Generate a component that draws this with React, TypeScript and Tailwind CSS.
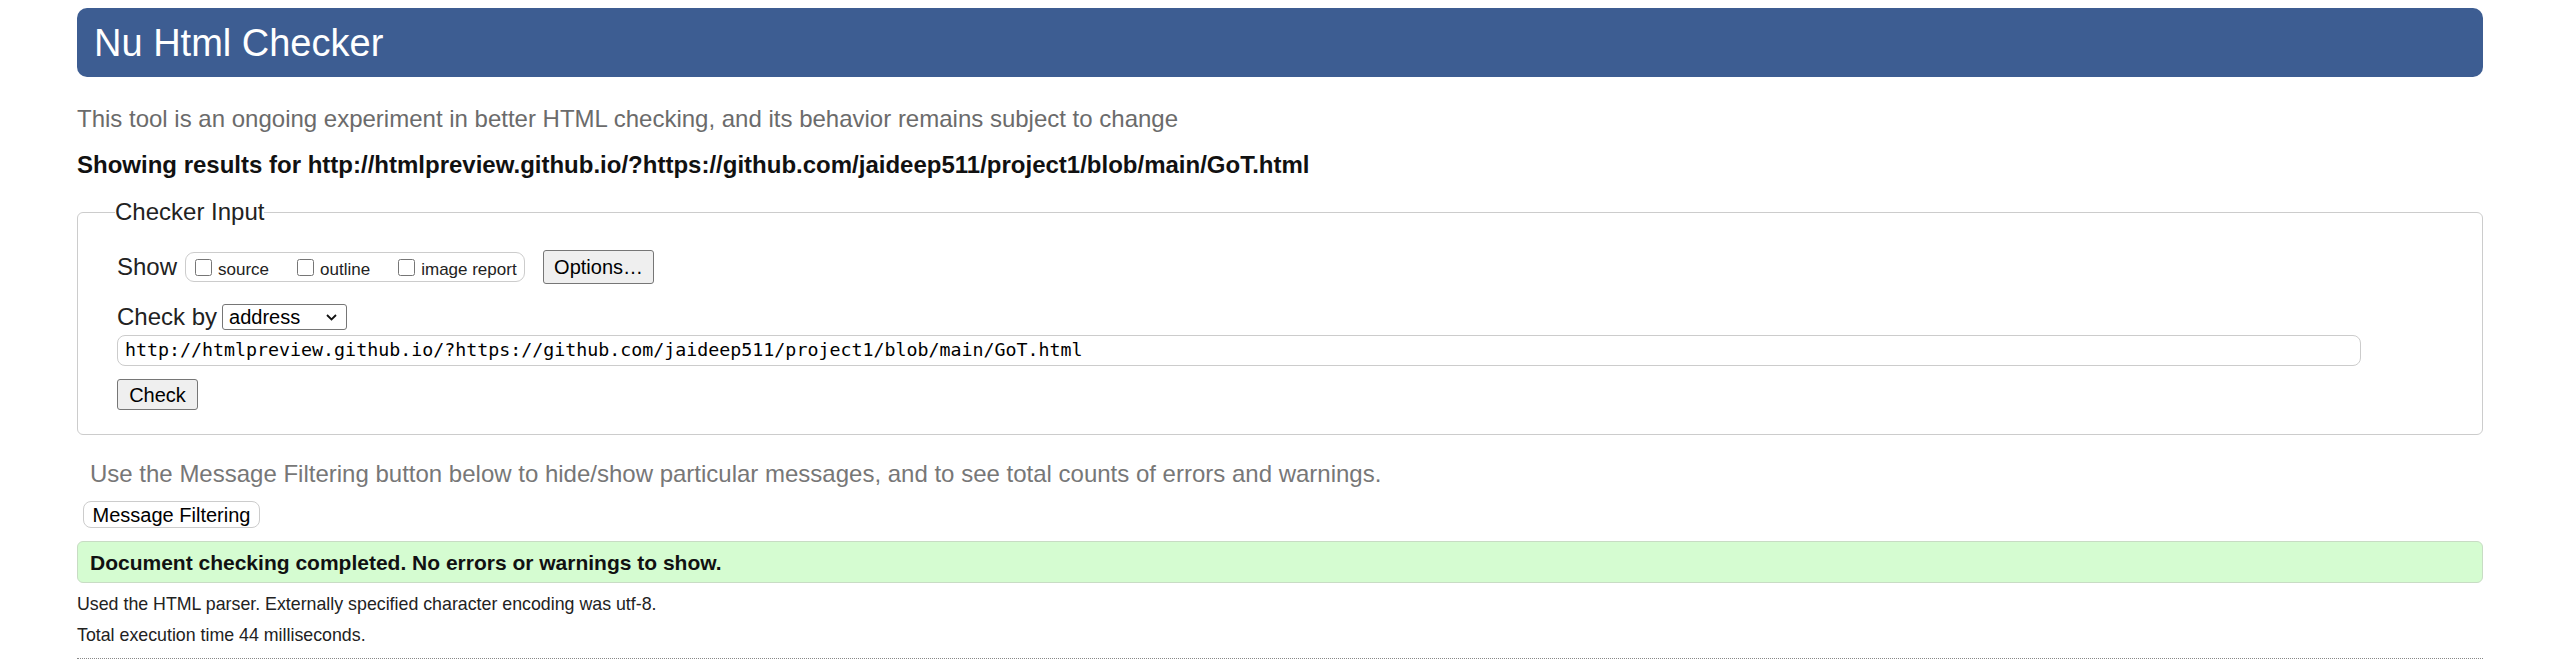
import React from "react";

export default function App() {
  return (
    <div
      className="bg-white min-h-[663px] px-[77px] pt-[8px] text-[#222]"
      style={{ fontFamily: '"Liberation Sans", Arial, sans-serif' }}
    >
      <div className="h-[69px] rounded-[10px] bg-[#3d5d92] flex items-center pl-[17px]">
        <h1 className="text-[38px] leading-none text-white font-normal">Nu Html Checker</h1>
      </div>

      <p className="mt-[27px] h-[30px] leading-[30px] text-[24px] text-[#6b6b6b]">
        This tool is an ongoing experiment in better HTML checking, and its behavior remains subject to change
      </p>

      <p className="mt-[16px] h-[30px] leading-[30px] text-[24px] font-bold text-[#111]">
        Showing results for http://htmlpreview.github.io/?https://github.com/jaideep511/project1/blob/main/GoT.html
      </p>

      <fieldset className="mt-[18px] border border-[#cccccc] rounded-[6px] px-[39px] pt-[24px] pb-[24px]">
        <legend className="-ml-[2px] text-[24px] leading-[28px] text-[#222]">Checker Input</legend>

        <div className="flex items-center h-[34px]">
          <span className="text-[24px] leading-none">Show</span>
          <div className="ml-[8px] h-[30px] w-[340px] border border-[#cccccc] rounded-[9px] flex items-center pl-[9px] gap-[28px]">
            <label className="flex items-center gap-[6px]">
              <input type="checkbox" className="m-0 w-[17px] h-[17px]" />
              <span className="text-[17px] leading-none mt-[5px]">source</span>
            </label>
            <label className="flex items-center gap-[6px]">
              <input type="checkbox" className="m-0 w-[17px] h-[17px]" />
              <span className="text-[17px] leading-none mt-[5px]">outline</span>
            </label>
            <label className="flex items-center gap-[6px]">
              <input type="checkbox" className="m-0 w-[17px] h-[17px]" />
              <span className="text-[17px] leading-none mt-[5px]">image report</span>
            </label>
          </div>
          <button className="ml-[18px] h-[34px] w-[111px] bg-[#efefef] border border-[#767676] rounded-[3px] text-[20px] leading-none text-black">
            Options…
          </button>
        </div>

        <div className="mt-[18px] flex items-center h-[30px]">
          <span className="text-[24px] leading-none">Check by</span>
          <div className="ml-[5px] h-[26px] w-[125px] border border-[#767676] rounded-[3px] bg-white flex items-center justify-between pl-[6px] pr-[9px]">
            <span className="text-[20px] leading-none text-black">address</span>
            <svg width="11" height="7" viewBox="0 0 11 7" fill="none">
              <path d="M1 1 L5.5 5.5 L10 1" stroke="#111" strokeWidth="1.8" />
            </svg>
          </div>
        </div>

        <div className="mt-[3px] h-[31px] w-[2244px] border border-[#cccccc] rounded-[8px] flex items-center pl-[7px]">
          <span
            className="text-[18.3px] leading-none text-black"
            style={{ fontFamily: '"DejaVu Sans Mono", "Liberation Mono", monospace' }}
          >
            http://htmlpreview.github.io/?https://github.com/jaideep511/project1/blob/main/GoT.html
          </span>
        </div>

        <button className="mt-[13px] block h-[31px] w-[81px] bg-[#efefef] border border-[#767676] rounded-[3px] text-[20px] leading-none text-black">
          Check
        </button>
      </fieldset>

      <p className="mt-[24px] pl-[13px] h-[30px] leading-[30px] text-[24px] text-[#777]">
        Use the Message Filtering button below to hide/show particular messages, and to see total counts of errors and warnings.
      </p>

      <button className="mt-[12px] ml-[6px] block h-[27px] w-[177px] bg-white border border-[#cccccc] rounded-[8px] text-[20px] leading-none text-black">
        Message Filtering
      </button>

      <div className="mt-[13px] h-[42px] rounded-[6px] border border-[#c8dcc4] bg-[#d5fcd1] flex items-center pl-[12px]">
        <span className="text-[21px] font-bold leading-none text-[#111]">
          Document checking completed. No errors or warnings to show.
        </span>
      </div>

      <p className="mt-[10px] h-[22px] leading-[22px] text-[17.8px] text-[#222]">
        Used the HTML parser. Externally specified character encoding was utf-8.
      </p>
      <p className="mt-[9px] h-[22px] leading-[22px] text-[17.8px] text-[#222]">
        Total execution time 44 milliseconds.
      </p>

      <div className="mt-[12px] border-t border-dotted border-[#888]" />
    </div>
  );
}
